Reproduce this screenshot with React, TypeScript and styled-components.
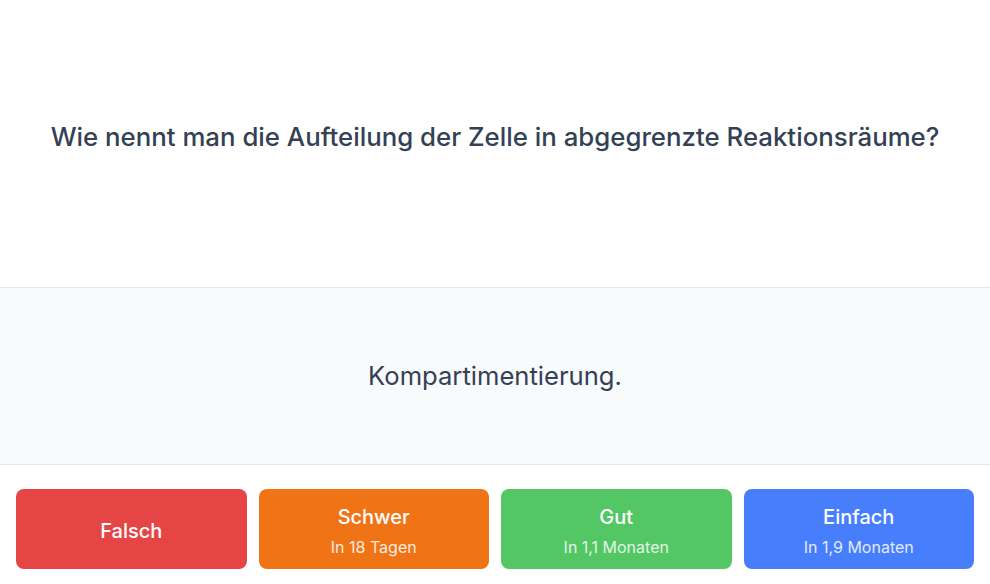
import React from "react";
import styled, { createGlobalStyle } from "styled-components";

const Global = createGlobalStyle`
  html, body { margin: 0; padding: 0; background: #ffffff; }
  body { font-family: Inter, "Noto Sans", sans-serif; -webkit-font-smoothing: antialiased; }
  * { box-sizing: border-box; }
`;

const Page = styled.div`
  display: flex;
  flex-direction: column;
  width: 990px;
  height: 584px;
  overflow: hidden;
`;

const Question = styled.section`
  height: 288px;
  flex-shrink: 0;
  display: flex;
  align-items: center;
  justify-content: center;
  padding: 0 24px 14px;
  border-bottom: 1px solid #e2e8f0;
`;

const QuestionText = styled.h1`
  margin: 0;
  font-size: 25.8px;
  font-weight: 500;
  color: #334155;
  text-align: center;
`;

const Answer = styled.section`
  height: 177px;
  flex-shrink: 0;
  display: flex;
  align-items: center;
  justify-content: center;
  padding-bottom: 1px;
  background: #f8fafc;
  border-bottom: 1px solid #e2e8f0;
`;

const AnswerText = styled.p`
  margin: 0;
  font-size: 25.6px;
  font-weight: 400;
  color: #334155;
`;

const Footer = styled.div`
  display: grid;
  grid-template-columns: repeat(4, 1fr);
  gap: 12px;
  padding: 24px 16px 16px;
`;

const RateButton = styled.button<{ $bg: string }>`
  height: 80px;
  border: none;
  border-radius: 8px;
  padding: 4px 0 0;
  background: ${(p) => p.$bg};
  color: #ffffff;
  font-family: inherit;
  display: flex;
  flex-direction: column;
  align-items: center;
  justify-content: center;
  gap: 8px;
  cursor: pointer;
`;

const Label = styled.span`
  font-size: 20px;
  font-weight: 500;
  line-height: 24px;
`;

const Sub = styled.span`
  font-size: 16px;
  font-weight: 400;
  line-height: 20px;
  opacity: 0.85;
`;

const buttons = [
  { label: "Falsch", bg: "#e64545" },
  { label: "Schwer", sub: "In 18 Tagen", bg: "#f07416" },
  { label: "Gut", sub: "In 1,1 Monaten", bg: "#52c764" },
  { label: "Einfach", sub: "In 1,9 Monaten", bg: "#467efc" },
];

export default function App() {
  return (
    <>
      <Global />
      <Page>
        <Question>
          <QuestionText>Wie nennt man die Aufteilung der Zelle in abgegrenzte Reaktionsräume?</QuestionText>
        </Question>
        <Answer>
          <AnswerText>Kompartimentierung.</AnswerText>
        </Answer>
        <Footer>
          {buttons.map((b) => (
            <RateButton key={b.label} $bg={b.bg}>
              <Label>{b.label}</Label>
              {b.sub && <Sub>{b.sub}</Sub>}
            </RateButton>
          ))}
        </Footer>
      </Page>
    </>
  );
}
